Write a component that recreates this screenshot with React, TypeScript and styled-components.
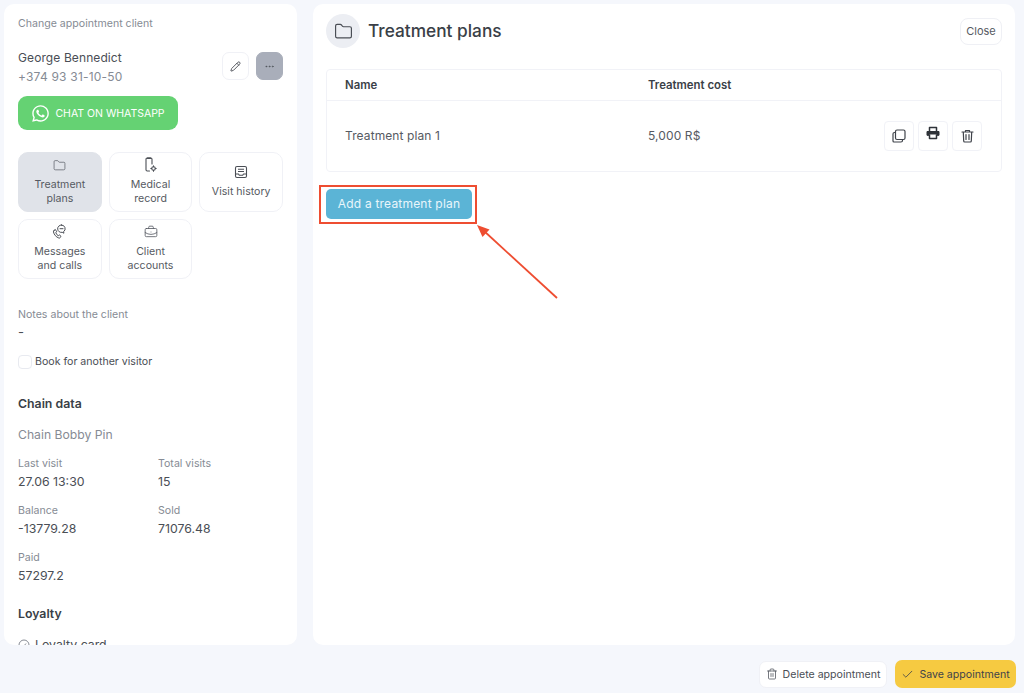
import React from "react";
import styled, { createGlobalStyle } from "styled-components";
import { Folder, Pencil, Ellipsis, Check, BriefcaseBusiness, Trash2 } from "lucide-react";
import { FaWhatsapp } from "react-icons/fa";

const Global = createGlobalStyle`
  html, body { margin: 0; padding: 0; }
  body { background: #f5f7fc; font-family: Inter, "Liberation Sans", sans-serif; color: #3a3f47; }
  * { box-sizing: border-box; }
`;

const Page = styled.div`
  position: relative;
  width: 1024px;
  height: 693px;
  overflow: hidden;
  display: flex;
  flex-direction: column;
  padding: 4px 8px 5px 4px;
`;
const Columns = styled.div`
  display: flex;
  gap: 16px;
  height: 641px;
  margin-right: 1px;
`;
const Panel = styled.section`
  background: #fff;
  border-radius: 10px;
  overflow: hidden;
`;
const Sidebar = styled(Panel)`
  width: 293px;
  padding: 13px 14px 0;
`;
const Main = styled(Panel)`
  flex: 1;
  padding: 10px 13px 0 13px;
`;
const Muted = styled.div`
  font-size: 10.6px;
  line-height: 14px;
  color: #868b94;
`;
const ClientRow = styled.div`
  display: flex;
  justify-content: space-between;
  align-items: flex-start;
  margin-top: 18px;
`;
const ClientName = styled.div`
  font-size: 12px;
  line-height: 18px;
  letter-spacing: 0.1px;
  color: #4a4e55;
`;
const Phone = styled(ClientName)`
  color: #868b94;
  margin-top: 1px;
  letter-spacing: 0.2px;
`;
const ClientActions = styled.div`
  display: flex;
  gap: 7px;
  margin-top: 3px;
`;
const SquareButton = styled.button<{ $dark?: boolean }>`
  width: 27px;
  height: 28px;
  padding: 0;
  border-radius: 7px;
  border: 1px solid ${(p) => (p.$dark ? "#a9aeba" : "#f0f1f6")};
  background: ${(p) => (p.$dark ? "#a9aeba" : "#fff")};
  color: #4a4e55;
  display: flex;
  align-items: center;
  justify-content: center;
`;
const WhatsApp = styled.button`
  width: 160px;
  height: 34px;
  margin-top: 10px;
  border: 0;
  border-radius: 9px;
  background: #65d273;
  color: #fff;
  font: 400 10.5px Inter, sans-serif;
  display: flex;
  align-items: center;
  justify-content: center;
  gap: 5px;
  padding: 0;
`;
const TileGrid = styled.div`
  display: grid;
  grid-template-columns: repeat(3, 83.7px);
  grid-auto-rows: 60px;
  gap: 7px;
  margin-top: 22px;
`;
const Tile = styled.div<{ $active?: boolean }>`
  border-radius: 10px;
  border: 1px solid ${(p) => (p.$active ? "#e0e3e9" : "#f0f1f6")};
  background: ${(p) => (p.$active ? "#e0e3e9" : "#fff")};
  display: flex;
  flex-direction: column;
  align-items: center;
  justify-content: center;
  gap: 5px;
  text-align: center;
  font-size: 10.6px;
  line-height: 14px;
  color: #565a62;
  padding-bottom: 1px;
`;
const TileIcon = styled.span`
  height: 16px;
  display: flex;
  align-items: center;
  justify-content: center;
`;
const NotesBlock = styled.div`
  margin-top: 29px;
`;
const Dash = styled.div`
  font-size: 13px;
  line-height: 18px;
  margin-top: 1px;
  color: #4a4e55;
`;
const CheckRow = styled.label`
  display: flex;
  align-items: center;
  gap: 3px;
  margin-top: 14px;
  font-size: 10.6px;
  line-height: 14px;
  color: #4a4e55;
`;
const CheckBox = styled.span`
  width: 14px;
  height: 14px;
  border: 1px solid #e8eaf0;
  border-radius: 4px;
  background: #fff;
`;
const SectionTitle = styled.h3<{ $top: number }>`
  margin: ${(p) => p.$top}px 0 0;
  font-size: 12.3px;
  line-height: 16px;
  font-weight: 600;
  color: #3a3f47;
`;
const ChainName = styled.div`
  font-size: 12.2px;
  line-height: 16px;
  color: #868b94;
  margin-top: 15px;
`;
const StatsGrid = styled.div`
  display: grid;
  grid-template-columns: 140px 1fr;
  row-gap: 13px;
  margin-top: 14px;
`;
const StatValue = styled.div`
  font-size: 12.3px;
  line-height: 18px;
  margin-top: 2px;
  color: #4a4e55;
`;
const LoyaltyRow = styled.div`
  display: flex;
  align-items: center;
  gap: 5px;
  margin-top: 15px;
  font-size: 12.3px;
  line-height: 16px;
  color: #4a4e55;
`;
const Header = styled.header`
  display: flex;
  align-items: center;
  gap: 8px;
`;
const IconCircle = styled.div`
  width: 34px;
  height: 34px;
  border-radius: 50%;
  background: #eceef3;
  display: flex;
  align-items: center;
  justify-content: center;
  color: #4a4e55;
`;
const Title = styled.h1`
  flex: 1;
  margin: 0;
  font-size: 17.3px;
  font-weight: 500;
  line-height: 34px;
  color: #3a3f47;
`;
const CloseButton = styled.button`
  height: 27px;
  width: 42px;
  padding: 0;
  border: 1px solid #eff0f5;
  border-radius: 8px;
  background: #fff;
  color: #565a62;
  font: 400 11px Inter, sans-serif;
`;
const Table = styled.div`
  margin-top: 21px;
  height: 103px;
  border: 1px solid #f1f2f7;
  border-radius: 4px;
`;
const HeadRow = styled.div`
  display: grid;
  grid-template-columns: 303px 1fr;
  height: 31px;
  align-items: center;
  padding-left: 18px;
  border-bottom: 1px solid #f1f2f7;
  font-size: 11.4px;
  font-weight: 600;
  color: #3a3f47;
`;
const BodyRow = styled.div`
  display: grid;
  grid-template-columns: 303px 1fr auto;
  height: 70px;
  align-items: center;
  padding: 0 19px 2px 18px;
  font-size: 12px;
  letter-spacing: 0.1px;
  color: #565a62;
`;
const RowActions = styled.div`
  display: flex;
  gap: 4px;
  margin-top: 2px;
`;
const IconButton = styled.button`
  width: 30px;
  height: 30px;
  padding: 0;
  border: 1px solid #f1f2f7;
  border-radius: 4px;
  background: #fff;
  color: #3f434a;
  display: flex;
  align-items: center;
  justify-content: center;
`;
const PrintButton = styled(IconButton)`
  padding-bottom: 6px;
`;
const AddButton = styled.button`
  margin-top: 17px;
  width: 146px;
  height: 30px;
  padding: 0 0 1px;
  border: 0;
  border-radius: 5px;
  background: #5bb4d6;
  color: #e9f6fb;
  font: 400 12px Inter, sans-serif;
  letter-spacing: 0.2px;
`;
const Footer = styled.footer`
  display: flex;
  justify-content: flex-end;
  align-items: center;
  gap: 8px;
  margin-top: 15px;
`;
const DeleteButton = styled.button`
  width: 128px;
  height: 27px;
  padding: 0;
  border: 1px solid #f0f1f6;
  border-radius: 7px;
  background: #fff;
  color: #4a4e55;
  font: 400 10.6px Inter, sans-serif;
  display: flex;
  align-items: center;
  justify-content: center;
  gap: 5px;
`;
const SaveButton = styled.button`
  width: 121px;
  height: 28px;
  padding: 0;
  border: 0;
  border-radius: 7px;
  background: #f6ca41;
  color: #3f434a;
  font: 400 10.6px Inter, sans-serif;
  display: flex;
  align-items: center;
  justify-content: center;
  gap: 5px;
`;
const HighlightBox = styled.div`
  position: absolute;
  left: 319px;
  top: 185px;
  width: 158px;
  height: 39px;
  border: 2px solid #ee4d31;
  pointer-events: none;
`;
const Arrow = styled.svg`
  position: absolute;
  left: 470px;
  top: 220px;
  pointer-events: none;
`;

const MedicalIcon = () => (
  <svg width="14" height="16" viewBox="0 0 14 16" fill="none" stroke="#4a4e55" strokeWidth="1.1" strokeLinecap="round">
    <path d="M5.5 14H3.2A1.2 1.2 0 0 1 2 12.8V2.2A1.2 1.2 0 0 1 3.2 1h3.6A1.2 1.2 0 0 1 8 2.2V7" />
    <path d="M3.5 1.3h3" strokeWidth="1.6" />
    <circle cx="9.500" cy="11.500" r="1.800" />
    <path d="M9.500 8.800v.9M9.500 13.300v.9M6.800 11.500h.9M11.300 11.500h.9" />
  </svg>
);
const CallsIcon = () => (
  <svg width="15" height="16" viewBox="0 0 15 16" fill="none" stroke="#4a4e55" strokeWidth="1" strokeLinecap="round" strokeLinejoin="round">
    <path d="M2 6.500 3.400 5.500l1.300 2.300-.9.900c.4 1.400 1.200 2.300 2.500 3l.9-.9 1.800 1.500-.8 1.300c-.3.500-.8.600-1.400.4C4 13 2 10.500 1.500 8c-.1-.6.100-1.200.5-1.500Z" />
    <path d="M9.500 1a3.700 3.700 0 0 1 2.100 6.700l.3 1.500-1.700-.9A3.700 3.700 0 1 1 9.500 1Z" />
    <path d="M8 4.700h3" />
  </svg>
);
const HistoryIcon = () => (
  <svg width="14" height="14" viewBox="0 0 14 14" fill="none" stroke="#4a4e55" strokeWidth="1.1" strokeLinejoin="round">
    <rect x="1.500" y="1.500" width="11" height="11" rx="1.500" />
    <path d="M1.500 9h3l.8 1.300h3.400L9.500 9h3" />
    <path d="M4 4.200h6M4 6.500h6" />
  </svg>
);
const CopyIcon = () => (
  <svg width="14" height="14" viewBox="0 0 14 14" fill="none" stroke="#3f434a" strokeWidth="1.2" strokeLinejoin="round">
    <rect x="3.500" y="1" width="9.500" height="9.500" rx="1.500" />
    <path d="M3.500 3.500H2.500A1.500 1.500 0 0 0 1 5v7a1 1 0 0 0 1 1h7a1.500 1.500 0 0 0 1.500-1.500v-1" />
  </svg>
);
const PrintIcon = () => (
  <svg width="14" height="14" viewBox="0 0 14 14" fill="none" stroke="#2f3339" strokeLinejoin="round">
    <path d="M3.500 5V1.500h7V5" strokeWidth="1.500" />
    <path d="M1 5.500h12v3.800H1Z" fill="#2f3339" strokeWidth="1" />
    <path d="M3.500 8.500v4h7v-4" strokeWidth="1.500" fill="#fff" />
  </svg>
);
const BinIcon = () => (
  <svg width="13" height="14" viewBox="0 0 13 14" fill="none" stroke="#3f434a" strokeWidth="1.200" strokeLinecap="round" strokeLinejoin="round">
    <path d="M1 3h11M4.500 3V1.500h4V3M2.300 3l.4 9a1 1 0 0 0 1 1h5.600a1 1 0 0 0 1-1l.4-9M5 5.500v5M8 5.500v5" />
  </svg>
);

const Stat = ({ label, value }: { label: string; value: string }) => (
  <div>
    <Muted>{label}</Muted>
    <StatValue>{value}</StatValue>
  </div>
);

export default function App() {
  return (
    <Page>
      <Global />
      <Columns>
        <Sidebar>
          <Muted>Change appointment client</Muted>
          <ClientRow>
            <div>
              <ClientName>George Bennedict</ClientName>
              <Phone>+374 93 31-10-50</Phone>
            </div>
            <ClientActions>
              <SquareButton><Pencil size={11} /></SquareButton>
              <SquareButton $dark><Ellipsis size={11} strokeWidth={1.5} /></SquareButton>
            </ClientActions>
          </ClientRow>
          <WhatsApp><FaWhatsapp size={19} />CHAT ON WHATSAPP</WhatsApp>
          <TileGrid>
            <Tile $active><TileIcon><Folder size={13} strokeWidth={1.3} /></TileIcon><span>Treatment<br />plans</span></Tile>
            <Tile><TileIcon><MedicalIcon /></TileIcon><span>Medical<br />record</span></Tile>
            <Tile><TileIcon><HistoryIcon /></TileIcon><span>Visit history</span></Tile>
            <Tile><TileIcon><CallsIcon /></TileIcon><span>Messages<br />and calls</span></Tile>
            <Tile><TileIcon><BriefcaseBusiness size={14} strokeWidth={1.4} /></TileIcon><span>Client<br />accounts</span></Tile>
          </TileGrid>
          <NotesBlock>
            <Muted>Notes about the client</Muted>
            <Dash>-</Dash>
          </NotesBlock>
          <CheckRow><CheckBox />Book for another visitor</CheckRow>
          <SectionTitle $top={27}>Chain data</SectionTitle>
          <ChainName>Chain Bobby Pin</ChainName>
          <StatsGrid>
            <Stat label="Last visit" value="27.06 13:30" />
            <Stat label="Total visits" value="15" />
            <Stat label="Balance" value="-13779.28" />
            <Stat label="Sold" value="71076.48" />
            <Stat label="Paid" value="57297.2" />
          </StatsGrid>
          <SectionTitle $top={21}>Loyalty</SectionTitle>
          <LoyaltyRow>
            <svg width="12" height="12" viewBox="0 0 12 12" fill="none" stroke="#868b94" strokeWidth="1">
              <circle cx="6" cy="6" r="5" />
              <path d="m4 6 1.500 1.500L8 4.500" />
            </svg>
            Loyalty card
          </LoyaltyRow>
        </Sidebar>
        <Main>
          <Header>
            <IconCircle><Folder size={19} strokeWidth={1.5} /></IconCircle>
            <Title>Treatment plans</Title>
            <CloseButton>Close</CloseButton>
          </Header>
          <Table>
            <HeadRow><span>Name</span><span>Treatment cost</span></HeadRow>
            <BodyRow>
              <span>Treatment plan 1</span>
              <span>5,000 R$</span>
              <RowActions>
                <IconButton><CopyIcon /></IconButton>
                <PrintButton><PrintIcon /></PrintButton>
                <IconButton><BinIcon /></IconButton>
              </RowActions>
            </BodyRow>
          </Table>
          <AddButton>Add a treatment plan</AddButton>
        </Main>
      </Columns>
      <Footer>
        <DeleteButton><Trash2 size={12} strokeWidth={1.5} />Delete appointment</DeleteButton>
        <SaveButton><Check size={13} strokeWidth={1.5} />Save appointment</SaveButton>
      </Footer>
      <HighlightBox />
      <Arrow width="92" height="82" viewBox="0 0 92 82" fill="none">
        <path d="M87 78 14 11" stroke="#ee4d31" strokeWidth="1.800" />
        <path d="M7 5 19.500 9.500 12.500 17Z" fill="#ee4d31" />
      </Arrow>
    </Page>
  );
}
